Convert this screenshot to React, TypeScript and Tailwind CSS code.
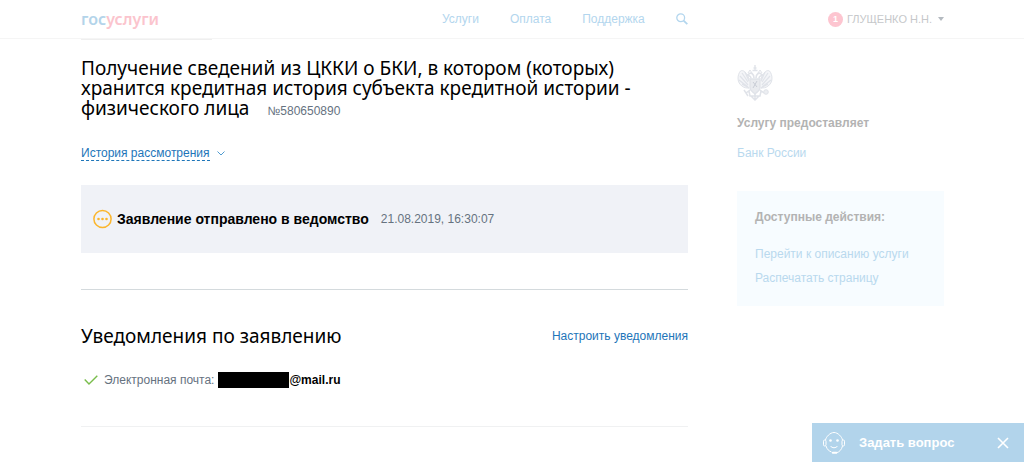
const navLinks = ['Услуги', 'Оплата', 'Поддержка'];
const actions = ['Перейти к описанию услуги', 'Распечатать страницу'];

function SearchIcon() {
  return (
    <svg width="12" height="12" viewBox="0 0 12 12" fill="none" stroke="currentColor" aria-hidden="true">
      <circle cx="4.7" cy="4.7" r="3.9" strokeWidth="1.3" />
      <path d="M7.6 7.6 11.3 11.2" strokeWidth="1.8" />
    </svg>
  );
}

function EagleIcon() {
  return (
    <svg width="36" height="38" viewBox="0 0 36 38" fill="none" stroke="#e0e3e9" aria-hidden="true">
      <path d="M16.500 5h3M18 2v6M15.500 7.500h5" strokeWidth="1.4" />
      <path d="M11 10 13 7l2 3M21 10 23 7l2 3" />
      <path
        d="M17 15c0-4-3-6-5-4l-2 1.500c2 0 4 0 4 3M19 15c0-4 3-6 5-4l2 1.500c-2 0-4 0-4 3"
        strokeWidth="1.6"
      />
      <path
        d="M12 16C10 10 6 6 3.500 8 0 12 0 20 5 23c2 2 5 2 7 2M24 16c2-6 6-10 8.500-8 3.500 4 3.500 12-1.500 15-2 2-5 2-7 2"
        fill="#f4f5f8"
      />
      <path
        d="M5 10l6 9M3 13l8 9M2 17l9 7M8 9l4 9M5 21l7 4M31 10l-6 9M33 13l-8 9M34 17l-9 7M28 9l-4 9M31 21l-7 4"
        strokeWidth="1.2"
      />
      <path d="M13 16h10v9c0 3-3 4-5 6-2-2-5-3-5-6z" fill="#e9ebef" strokeWidth="1.4" />
      <path d="M16 19l4 5M20 18l-4 7" stroke="#c9cdd6" />
      <path d="M13 27l-4 3-2-3M9 30l2 3M23 27l4 3M12 28l1 5h10l1-5M14 33l4 4 4-4M18 30v7" strokeWidth="1.5" />
      <circle cx="29" cy="29" r="2.300" fill="#eceef2" />
    </svg>
  );
}

function OperatorIcon() {
  return (
    <svg width="24" height="24" viewBox="0 0 24 24" fill="none" stroke="white" aria-hidden="true">
      <path d="M3.500 9C4 6 8 1.500 12 1.500S20 6 20.500 9M4 15c1 3.500 3 5 5.500 6M20.500 15c-.8 3.500-3 6-6 6.800" />
      <rect x="1.500" y="9" width="2.500" height="6" rx="1.200" />
      <rect x="20" y="9" width="2.500" height="6" rx="1.200" />
      <path d="M8.500 15c1.500 2.300 5.500 2.300 7 0" />
      <path d="M10.800 21.800h3.500" strokeWidth="2" strokeLinecap="round" />
      <circle cx="8.500" cy="9.500" r="1.300" fill="white" stroke="none" />
      <circle cx="15.500" cy="9.500" r="1.300" fill="white" stroke="none" />
    </svg>
  );
}

function Header() {
  return (
    <header className="border-b border-[#f5f5f5]">
      <div className="flex h-[38px] items-center pr-20 pl-[81px]">
        <a href="#" className="w-[361px] font-['Noto_Sans',sans-serif] text-[16px] leading-5 font-semibold">
          <span className="text-[#b3d4ea]">гос</span>
          <span className="text-[#fbc4cd]">услуги</span>
        </a>
        <nav className="flex items-center gap-[31px] text-[#b3d6ee]">
          {navLinks.map((label) => (
            <a key={label} href="#">
              {label}
            </a>
          ))}
          <button type="button" aria-label="Поиск">
            <SearchIcon />
          </button>
        </nav>
        <button type="button" className="ml-auto flex items-center text-[11px] leading-4 text-[#c6c8ca]">
          <span className="mr-1 flex size-[15px] items-center justify-center rounded-full bg-[#fdc5d0] text-[9px] font-bold text-white">
            1
          </span>
          ГЛУЩЕНКО Н.Н.
          <svg className="ml-[6px]" width="6" height="4" viewBox="0 0 6 4" fill="#b4bac0" aria-hidden="true">
            <path d="M0 0h6L3 4z" />
          </svg>
        </button>
      </div>
    </header>
  );
}

function Aside() {
  return (
    <aside className="w-[207px] shrink-0 pt-6">
      <EagleIcon />
      <h2 className="mt-3 font-bold text-[#b3b3b3]">Услугу предоставляет</h2>
      <a href="#" className="mt-[10px] block text-[#b9d9ee]">
        Банк России
      </a>
      <div className="mt-7 bg-[#f7fcff] px-[18px] py-4">
        <h2 className="font-bold text-[#b3b3b3]">Доступные действия:</h2>
        <ul className="mt-[15px] leading-6 text-[#b9d9ee]">
          {actions.map((label) => (
            <li key={label}>
              <a href="#">{label}</a>
            </li>
          ))}
        </ul>
      </div>
    </aside>
  );
}

export default function App() {
  return (
    <div className="min-h-screen bg-white font-['Liberation_Sans',Arial,sans-serif] text-[12px] leading-5 text-[#66727f]">
      <Header />
      <div className="flex gap-[49px] pr-20 pl-[81px]">
        <main className="min-w-0 flex-1">
          <div className="h-px w-[131px] bg-[#efefef]" />
          <h1 className="mt-[18px] font-['Noto_Sans',sans-serif] text-[19px] leading-5 text-black">
            Получение сведений из ЦККИ о БКИ, в котором (которых) хранится кредитная история субъекта кредитной
            истории - физического лица
            <span className="ml-[18px] font-['Liberation_Sans',Arial,sans-serif] text-[12px] leading-3 whitespace-nowrap text-[#66727f]">
              №580650890
            </span>
          </h1>

          <button type="button" className="mt-7 flex items-center gap-[7px] text-[#1d75b9]">
            <span className="border-b border-dashed border-[#1d75b9] leading-[14px]">История рассмотрения</span>
            <svg width="8" height="5" viewBox="0 0 8 5" fill="none" stroke="#4f9bd0" aria-hidden="true">
              <path d="M.5.5 4 4 7.500.5" />
            </svg>
          </button>

          <section className="mt-6 flex items-center bg-[#f0f2f7] px-3 py-6">
            <svg width="19" height="20" viewBox="0 0 19 20" fill="#fbb62d" aria-hidden="true">
              <circle cx="9.500" cy="10" r="8.600" fill="none" stroke="#fbb62d" strokeWidth="1.500" />
              <circle cx="5.500" cy="10" r="1.300" />
              <circle cx="9.500" cy="10" r="1.300" />
              <circle cx="13.500" cy="10" r="1.300" />
            </svg>
            <strong className="ml-[5px] text-[14px] text-black">Заявление отправлено в ведомство</strong>
            <time className="ml-3" dateTime="2019-08-21T16:30:07">
              21.08.2019, 16:30:07
            </time>
          </section>

          <hr className="mt-9 border-[#d4dadd]" />

          <section className="border-b border-[#f0f1f2] py-9">
            <div className="flex items-center justify-between">
              <h2 className="font-['Noto_Sans',sans-serif] text-[19px] leading-5 text-black">
                Уведомления по заявлению
              </h2>
              <a href="#" className="text-[#1d75b9]">
                Настроить уведомления
              </a>
            </div>
            <p className="mt-6 flex items-center pl-[3px]">
              <svg width="14" height="10" viewBox="0 0 14 10" fill="none" stroke="#79bd4b" aria-hidden="true">
                <path d="M.7 4.500 5 9 13.300.7" strokeWidth="1.400" />
              </svg>
              <span className="ml-[6px]">Электронная почта:</span>
              <span className="ml-1 h-4 w-[71px] bg-black" />
              <strong className="text-black">@mail.ru</strong>
            </p>
          </section>
        </main>
        <Aside />
      </div>

      <div className="fixed right-0 bottom-0 flex h-[39px] w-[212px] items-center bg-[#b2d4eb] pr-[15px] pl-[10px] text-white">
        <button type="button" className="flex items-center gap-[13px] text-[13px] font-bold">
          <OperatorIcon />
          Задать вопрос
        </button>
        <button type="button" aria-label="Закрыть" className="ml-auto">
          <svg width="12" height="12" viewBox="0 0 12 12" fill="none" stroke="white" aria-hidden="true">
            <path d="M1 1l10 10M11 1 1 11" strokeWidth="1.600" />
          </svg>
        </button>
      </div>
    </div>
  );
}
